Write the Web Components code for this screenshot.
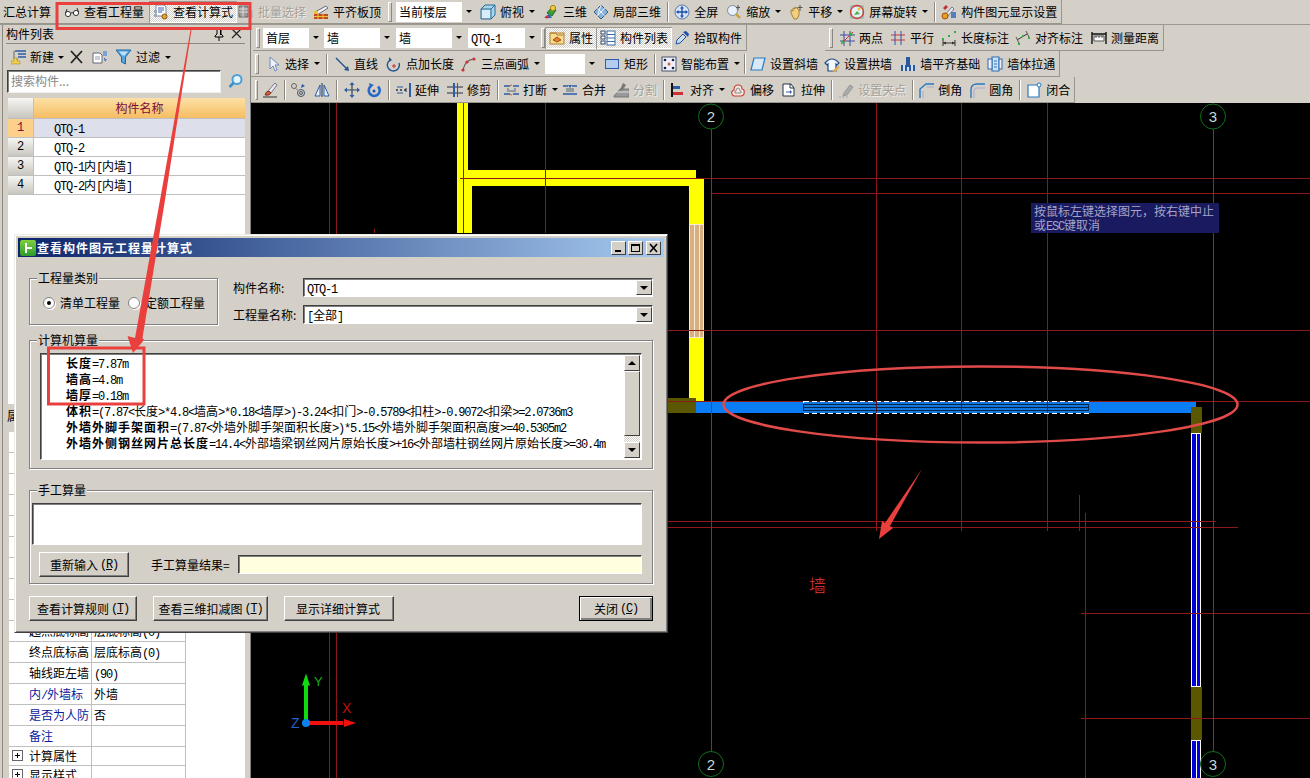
<!DOCTYPE html>
<html lang="zh">
<head>
<meta charset="utf-8">
<title>查看构件图元工程量计算式</title>
<style>
  html, body { margin: 0; width: 1310px; height: 778px; overflow: hidden; background: #d4d0c8; }
  body { position: relative; font: 12px/16px "Noto Sans CJK SC", "Liberation Sans", sans-serif; color: #000; }
  .l { font: 12px/16px "Liberation Mono", monospace; letter-spacing: -1.2px; }
</style>
</head>
<body>

<gl-app>
  <gl-toolbar slot="top">
    <gl-tool style="margin-left:-1px">汇总计算</gl-tool>
    <gl-tool icon="glasses" style="margin-left:5px">查看工程量</gl-tool>
    <gl-tool icon="calc" pressed style="margin-left:1px">查看计算式</gl-tool>
    <gl-tool icon="batch" disabled style="margin-left:-3px">批量选择</gl-tool>
    <gl-tool icon="level" style="margin-left:-1px">平齐板顶</gl-tool>
    <gl-grip style="margin:0 4px 0 3px"></gl-grip>
    <gl-combo w="80">当前楼层</gl-combo>
    <gl-tool icon="cube" caret>俯视</gl-tool>
    <gl-tool icon="view3d">三维</gl-tool>
    <gl-tool icon="local3d" style="margin-left:-2px">局部三维</gl-tool>
    <gl-sep></gl-sep>
    <gl-tool icon="full">全屏</gl-tool>
    <gl-tool icon="zoom" caret>缩放</gl-tool>
    <gl-tool icon="pan" caret style="margin-left:-1px">平移</gl-tool>
    <gl-tool icon="spin" caret style="margin-left:-2px">屏幕旋转</gl-tool>
    <gl-sep></gl-sep>
    <gl-tool icon="display">构件图元显示设置</gl-tool>
  </gl-toolbar>

  <gl-dock-panel slot="left"></gl-dock-panel>

  <gl-toolbar-row slot="bars">
    <gl-toolbar style="margin-left:2px">
      <gl-grip style="margin:0 3px 0 3px"></gl-grip>
      <gl-combo w="60">首层</gl-combo>
      <gl-combo w="70" style="margin-left:1px">墙</gl-combo>
      <gl-combo w="70" style="margin-left:2px">墙</gl-combo>
      <gl-combo w="71" style="margin-left:2px"><span class="l">QTQ-1</span></gl-combo>
      <gl-grip style="margin:0 1px 0 2px"></gl-grip>
      <gl-tool icon="prop" pressed style="margin-left:-1px">属性</gl-tool>
      <gl-tool icon="list" pressed style="margin-left:-1px">构件列表</gl-tool>
      <gl-tool icon="pick" style="margin-left:-2px">拾取构件</gl-tool>
    </gl-toolbar>
    <gl-toolbar style="margin-left:78px">
      <gl-grip style="margin:0 2px 0 4px"></gl-grip>
      <gl-tool icon="twopoint">两点</gl-tool>
      <gl-tool icon="parallel" style="margin-left:-1px">平行</gl-tool>
      <gl-tool icon="lenmark" style="margin-left:-1px">长度标注</gl-tool>
      <gl-tool icon="alignmark" style="margin-left:-2px">对齐标注</gl-tool>
      <gl-tool icon="measure">测量距离</gl-tool>
    </gl-toolbar>
  </gl-toolbar-row>

  <gl-toolbar-row slot="bars">
    <gl-toolbar>
      <gl-grip style="margin:0 2px 0 4px"></gl-grip>
      <gl-tool icon="cursor" caret>选择</gl-tool>
      <gl-sep></gl-sep>
      <gl-tool icon="line" style="margin-left:1px">直线</gl-tool>
      <gl-tool icon="pointlen">点加长度</gl-tool>
      <gl-tool icon="arc" caret style="margin-left:-1px">三点画弧</gl-tool>
      <gl-combo w="54" style="margin-left:1px"></gl-combo>
      <gl-tool icon="rect" style="margin-left:1px">矩形</gl-tool>
      <gl-sep></gl-sep>
      <gl-tool icon="smart" caret>智能布置</gl-tool>
      <gl-sep style="margin:0"></gl-sep>
      <gl-tool icon="skew">设置斜墙</gl-tool>
      <gl-tool icon="arch" style="margin-left:-2px">设置拱墙</gl-tool>
      <gl-tool icon="base">墙平齐基础</gl-tool>
      <gl-tool icon="pull" style="margin-left:-1px">墙体拉通</gl-tool>
    </gl-toolbar>
  </gl-toolbar-row>

  <gl-toolbar-row slot="bars">
    <gl-toolbar>
      <gl-grip style="margin:0 0 0 4px;width:3px"></gl-grip>
      <gl-tool icon="brush"></gl-tool>
      <gl-sep></gl-sep>
      <gl-tool icon="copy" style="margin-left:-1px"></gl-tool>
      <gl-tool icon="mirror"></gl-tool>
      <gl-sep></gl-sep>
      <gl-tool icon="move" style="margin-left:1px"></gl-tool>
      <gl-tool icon="rotate" style="margin-left:-2px"></gl-tool>
      <gl-sep></gl-sep>
      <gl-tool icon="extend">延伸</gl-tool>
      <gl-tool icon="trim">修剪</gl-tool>
      <gl-sep></gl-sep>
      <gl-tool icon="break" caret style="margin-left:-1px">打断</gl-tool>
      <gl-tool icon="merge" style="margin-left:-4px">合并</gl-tool>
      <gl-tool icon="split" disabled style="margin-left:-1px">分割</gl-tool>
      <gl-sep></gl-sep>
      <gl-tool icon="align" caret>对齐</gl-tool>
      <gl-tool icon="offset" style="margin-left:-3px">偏移</gl-tool>
      <gl-tool icon="stretch" style="margin-left:-1px">拉伸</gl-tool>
      <gl-sep></gl-sep>
      <gl-tool icon="grippt" disabled>设置夹点</gl-tool>
      <gl-sep></gl-sep>
      <gl-tool icon="chamfer" style="margin-left:-1px">倒角</gl-tool>
      <gl-tool icon="fillet" style="margin-left:-1px">圆角</gl-tool>
      <gl-sep></gl-sep>
      <gl-tool icon="closed">闭合</gl-tool>
    </gl-toolbar>
  </gl-toolbar-row>

  <gl-cad-view slot="canvas"></gl-cad-view>
</gl-app>

<gl-dialog title="查看构件图元工程量计算式">
  <gl-dialog-head>
    <gl-group legend="工程量类别" style="width:189px;height:47px">
      <gl-radios></gl-radios>
    </gl-group>
    <gl-form-row label="构件名称:"><gl-field arrow><span class="l">QTQ-1</span></gl-field></gl-form-row>
    <gl-form-row label="工程量名称:"><gl-field arrow><span class="l">[</span>全部<span class="l">]</span></gl-field></gl-form-row>
  </gl-dialog-head>

  <gl-group legend="计算机算量" style="height:129px;margin-top:16px">
    <gl-calc-box>
      <gl-mix b="长度" text="=7.87m"></gl-mix>
      <gl-mix b="墙高" text="=4.8m"></gl-mix>
      <gl-mix b="墙厚" text="=0.18m"></gl-mix>
      <gl-mix b="体积" text="=(7.87<长度>*4.8<墙高>*0.18<墙厚>)-3.24<扣门>-0.5789<扣柱>-0.9072<扣梁>=2.0736m3"></gl-mix>
      <gl-mix b="外墙外脚手架面积" text="=(7.87<外墙外脚手架面积长度>)*5.15<外墙外脚手架面积高度>=40.5305m2"></gl-mix>
      <gl-mix b="外墙外侧钢丝网片总长度" text="=14.4<外部墙梁钢丝网片原始长度>+16<外部墙柱钢丝网片原始长度>=30.4m"></gl-mix>
    </gl-calc-box>
  </gl-group>

  <gl-group legend="手工算量" style="height:94px;margin-top:21px">
    <gl-manual-input></gl-manual-input>
  </gl-group>

  <gl-dialog-foot>
    <gl-button w="108" key="T">查看计算规则</gl-button>
    <gl-button w="115" key="T" style="margin-left:16px">查看三维扣减图</gl-button>
    <gl-button w="110" style="margin-left:16px">显示详细计算式</gl-button>
    <gl-button w="74" key="C" default style="margin-left:auto">关闭</gl-button>
  </gl-dialog-foot>
</gl-dialog>

<gl-tip>按鼠标左键选择图元，按右键中止<br>或<span class="l">ESC</span>键取消</gl-tip>
<gl-marks></gl-marks>

<script>
// small helper for the shadow root boilerplate
function shadow(el, css, html) {
  el.attachShadow({ mode: 'open' }).innerHTML = '<style>' + css + '</style>' + html;
}

// CJK stays full width, latin runs get squeezed to 6px a char (the SimSun half width)
function mix(str) {
  return str.replace(/[\x20-\x7e]+/g, function (m) {
    var t = m.replace(/&/g, '&amp;').replace(/</g, '&lt;').replace(/>/g, '&gt;');
    return '<span style="font:12px/16px \'Liberation Mono\',monospace;letter-spacing:-1.2px">' + t + '</span>';
  });
}

const ICONS = {
  glasses: '<circle cx="4" cy="10" r="2.6" fill="#fff" stroke="#333"/><circle cx="12" cy="9" r="2.6" fill="#fff" stroke="#333"/><path d="M6.5 9.5Q8 8 9.5 9M1.5 9 3 5M14.5 8 13 4" fill="none" stroke="#333"/>',
  calc: '<path d="M3 1h8l2 2v9H3z" fill="#fff" stroke="#7a8aa8"/><path d="M5 4h6M5 6h6M5 8h4" stroke="#3a62b0"/><rect x="1" y="6" width="3" height="3" fill="#9ab"/><rect x="1" y="10" width="3" height="3" fill="#9ab"/><circle cx="11.5" cy="12.5" r="2.5" fill="#e8a030" stroke="#8a5a10"/>',
  batch: '<path d="M1 2h9v11H1z" fill="#999" stroke="#666"/><path d="M1 5h9M1 8h9M5 2v11" stroke="#ddd"/><path d="M11 6h4v8h-4z" fill="#bbb"/>',
  level: '<path d="M2 8 13 2l2 2L4 11z" fill="#f4f4f4" stroke="#667"/><rect x="1" y="10" width="14" height="5" fill="#c04a20"/><path d="M1 12.5h14M5 10v5M10 10v5" stroke="#f0c040"/><rect x="1" y="7" width="4" height="3" fill="#f0c030"/>',
  cube: '<path d="M1 5l4-4h10v10l-4 4H1z" fill="#a8d4ee" stroke="#2a6a90"/><path d="M1 5h10v10M11 5l4-4" fill="none" stroke="#2a6a90"/><path d="M2 6h8v8H2z" fill="#d8eefa"/>',
  view3d: '<path d="M4 9l5-6 4 3-4 6z" fill="#3aa040" stroke="#1a6a20"/><circle cx="10" cy="4" r="2.6" fill="#f0d040" stroke="#a88010"/><path d="M1 14l5-4 3 4z" fill="#3060c0"/><circle cx="4" cy="13" r="1.6" fill="#d03030"/>',
  local3d: '<path d="M1 8l7-7 7 7-7 7z" fill="#8ab4dc" stroke="#3a5e88"/><path d="M4.5 4.5l7 7M8 1l-3.500 10.500M11.500 4.500l-7 7M8 8l3.500-3.500" stroke="#e8f2fa" fill="none"/>',
  full: '<circle cx="8" cy="8" r="7" fill="#d6e4f6" stroke="#5878a8"/><path d="M8 3v10M3 8h10" stroke="#1d4fa8" stroke-width="1.400"/><path d="M8 2l2 2.500H6zM8 14l2-2.500H6zM2 8l2.500-2v4zM14 8l-2.500-2v4z" fill="#1d4fa8"/>',
  zoom: '<circle cx="6.500" cy="6.500" r="5" fill="#e8f0fa" stroke="#7a8aa0"/><path d="M10 10l4 4" stroke="#c8a030" stroke-width="2.400"/><path d="M12 1v5M10 3.500h4" stroke="#555"/>',
  pan: '<path d="M3 9V6l2 1V4l2 1V3l2 1V4l2 2v5l-2 4H6z" fill="#f0d080" stroke="#a88030"/><path d="M12 1v6M9.500 3.500h5" stroke="#555"/>',
  spin: '<rect x="2" y="2" width="12" height="12" fill="#dff0f8" stroke="#7aa" /><circle cx="8" cy="8" r="6.500" fill="none" stroke="#d04030" stroke-width="1.400"/><path d="M5 11l3-4 3 3" fill="#50b040"/><circle cx="10" cy="5" r="1.500" fill="#f0c030"/>',
  display: '<path d="M3 12l8-9 2 2-8 9z" fill="#e8e8f0" stroke="#778"/><circle cx="4" cy="12" r="3" fill="#e8a020" stroke="#a05010"/><path d="M10 8h5v6h-5z" fill="#5080c0"/><path d="M2 4l3-3 2 2-3 3z" fill="#c03030"/>',
  prop: '<rect x="1" y="3" width="14" height="11" fill="#f6dc90" stroke="#b08030"/><path d="M1 3h6l1 2h7" fill="none" stroke="#b08030"/><path d="M4 10l4-3 4 3-4 2z" fill="#e08030" stroke="#a05010"/>',
  list: '<rect x="1" y="1" width="4" height="3" fill="#fff" stroke="#346"/><rect x="1" y="6" width="4" height="3" fill="#fff" stroke="#346"/><rect x="1" y="11" width="4" height="3" fill="#fff" stroke="#346"/><rect x="7" y="1" width="8" height="14" fill="#fff" stroke="#3a6ea8"/><path d="M7 4.500h8M7 8h8M7 11.500h8" stroke="#3a6ea8"/>',
  pick: '<path d="M2 14l1-4 6-6 3 3-6 6z" fill="#cde" stroke="#1d4fa8"/><path d="M9 2l5 5 1-3-3-3z" fill="#1d4fa8"/>',
  twopoint: '<path d="M1 5h15M1 11h15M5 1v15M11 1v15" stroke="#3a4aa0" fill="none"/><path d="M2 14L14 2" stroke="#d03030"/><circle cx="4" cy="12" r="1.600" fill="#30b040"/><circle cx="12" cy="4" r="1.600" fill="#30b040"/>',
  parallel: '<path d="M1 5h14M1 10h14" stroke="#d03030"/><path d="M5 1v14M11 1v14" stroke="#3050b0"/>',
  lenmark: '<path d="M2 13h12M2 10v6M14 10v6" stroke="#333" fill="none"/><path d="M2 13l3-1.500v3zM14 13l-3-1.500v3z" fill="#333"/><rect x="1" y="8" width="2" height="2" fill="#30b040"/><rect x="13" y="1" width="2" height="2" fill="#30b040"/><rect x="7" y="5" width="2" height="2" fill="#30b040"/>',
  alignmark: '<path d="M2 10l10-6" stroke="#333"/><path d="M1 7l3 6M11 1l3 6" stroke="#555"/><rect x="3" y="13" width="2" height="2" fill="#30b040"/><rect x="13" y="7" width="2" height="2" fill="#30b040"/><rect x="7" y="5" width="2" height="2" fill="#30b040"/>',
  measure: '<path d="M1 4h14M1 14V2M15 14V2" stroke="#111" stroke-width="1.400" fill="none"/><path d="M3 6h10v5H3z" fill="#fff" stroke="#555"/><path d="M5 6v2M8 6v2M11 6v2" stroke="#555"/>',
  cursor: '<path d="M5 1v12l3-3 2 5 2-1-2-5h4z" fill="#eef2fa" stroke="#7088b8"/>',
  line: '<path d="M2 2l11 11" stroke="#23558f" stroke-width="1.400"/><path d="M15 15l-1-5-4 4z" fill="#23558f"/>',
  pointlen: '<path d="M13 7a6 6 0 1 1-9-3" fill="none" stroke="#23558f" stroke-width="1.400"/><path d="M3 1l3 3-3 2z" fill="#23558f"/><path d="M8 8v4M6 10h4" stroke="#c03030"/>',
  arc: '<path d="M2 14Q4 4 13 3" fill="none" stroke="#555" stroke-width="1.200"/><circle cx="2" cy="14" r="1.600" fill="#d03030"/><circle cx="6" cy="6" r="1.600" fill="#d03030"/><circle cx="13" cy="3" r="1.600" fill="#d03030"/>',
  rect: '<rect x="1.500" y="3.500" width="13" height="9" fill="#b4ccf0" stroke="#2a5ca8"/>',
  smart: '<rect x="1" y="1" width="14" height="14" fill="#eef" stroke="#456"/><g fill="#123"><circle cx="4" cy="4" r="1.300"/><circle cx="12" cy="4" r="1.300"/><circle cx="4" cy="12" r="1.300"/><circle cx="12" cy="12" r="1.300"/></g><circle cx="8" cy="8" r="1.500" fill="#d06020"/>',
  skew: '<path d="M4 2h11l-3 12H1z" fill="#d8e8f8" stroke="#2a7ac0" stroke-width="1.200"/>',
  arch: '<path d="M1 7Q8-1 15 7l-2 2-1-1v7H4V8L3 9z" fill="#f4f8fc" stroke="#1c4c84" stroke-width="1.200"/><path d="M8 15l6-5 2 1-5 5z" fill="#e0b050"/>',
  base: '<path d="M6 1h4v8H6z" fill="#2858a0"/><path d="M1 9h14v6H1z" fill="#2858a0"/><path d="M3 9h2v6H3zM11 9h2v6h-2zM7 11h2v4H7z" fill="#cfe0f4"/>',
  pull: '<rect x="5" y="1" width="7" height="14" fill="#d0e4f8" stroke="#2a6ab0"/><rect x="1" y="3" width="4" height="10" fill="#eef" stroke="#2a6ab0"/><rect x="12" y="3" width="3" height="10" fill="#eef" stroke="#2a6ab0"/><path d="M7 5h3M7 8h3M7 11h3" stroke="#2a6ab0"/>',
  brush: '<path d="M1 15h14" stroke="#333"/><path d="M6 9l7-8 2 2-6 8z" fill="#e8e8f0" stroke="#778"/><path d="M3 13q1-4 4-4l2 2q-1 3-6 2z" fill="#d06040" stroke="#803020"/>',
  copy: '<circle cx="4" cy="4" r="2.500" fill="none" stroke="#666"/><circle cx="11" cy="11" r="3.500" fill="none" stroke="#456"/><circle cx="11" cy="11" r="1.500" fill="none" stroke="#456"/><path d="M5 6l4 3" stroke="#888"/><path d="M12 2l3 2-4 2z" fill="#2a5ca8"/>',
  mirror: '<path d="M8 1v14" stroke="#234"/><path d="M6 3v11H1z" fill="#e8f0fa" stroke="#2a5ca8"/><path d="M10 3v11h5z" fill="#e8f0fa" stroke="#2a5ca8"/>',
  move: '<path d="M8 1v14M1 8h14" stroke="#345" stroke-width="1.200"/><path d="M8 0l2.500 3h-5zM8 16l2.500-3h-5zM0 8l3-2.500v5zM16 8l-3-2.500v5z" fill="#2a5ca8"/>',
  rotate: '<path d="M12 4.500a5.500 5.500 0 1 1-7-.5" fill="none" stroke="#2868c8" stroke-width="2.600"/><path d="M3 1l5 2-4 3z" fill="#2868c8"/><circle cx="8" cy="9" r="1.500" fill="#1d4fa8"/>',
  extend: '<path d="M1 8h2M5 8h2M9 8h2" stroke="#234" stroke-width="1.600"/><path d="M11 6v4" stroke="#234"/><path d="M14 1v14h2V1z" fill="#2a5ca8"/><path d="M2 5h6M2 11h6" stroke="#2a5ca8"/>',
  trim: '<path d="M0 5h16M0 11h16" stroke="#234"/><path d="M6 1v14h2V1zM10 1v14h1V1z" fill="#2a5ca8"/>',
  break: '<path d="M1 4h6M10 4h6" stroke="#2a5ca8" stroke-width="1.600"/><path d="M1 12h6M10 12h6" stroke="#2a5ca8" stroke-width="1.600"/><path d="M4 7h2M11 7h2M4 9h9" stroke="#567"/><path d="M8 2l1 2H7zM8 14l1-2H7z" fill="#d06020"/>',
  merge: '<path d="M1 4h5M10 4h5M1 12h14" stroke="#2a5ca8" stroke-width="1.600"/><path d="M4 7h8M4 9h8" stroke="#567"/><path d="M8 6l-2-3h4z" fill="#2a5ca8"/>',
  split: '<path d="M1 14l6-7h9v8H1z" fill="#999" stroke="#777"/><path d="M10 1l3 2-4 6-2-1z" fill="#777"/><path d="M1 10h15" stroke="#ddd"/>',
  align: '<path d="M2 1v14" stroke="#111" stroke-width="2"/><path d="M3 4h7v3H3z" fill="#2a5ca8"/><path d="M3 10h10v3H3z" fill="#d03030"/>',
  offset: '<path d="M2 12q-1-3 2-4 0-5 4-5t4 4q3 0 2 5-1 2-3 2H4q-1 0-2-2z" fill="#f8e8e4" stroke="#c04030" stroke-width="1.200"/><path d="M5 11q-1-2 1-2 0-3 2-3t2 3q2 0 1 2z" fill="none" stroke="#888"/>',
  stretch: '<path d="M2 2h8l3 4v8H2z" fill="#fff" stroke="#234"/><path d="M9 2v4h4" fill="none" stroke="#234"/><path d="M5 10h5" stroke="#2a5ca8"/><path d="M11 10l-2-2v4z" fill="#2a5ca8"/>',
  grippt: '<path d="M1 15h5M8 15h3" stroke="#aaa" stroke-dasharray="2 1"/><path d="M6 11l6-8 3 2-6 8-4 1z" fill="#aaa" stroke="#999"/>',
  chamfer: '<path d="M2 16V7l6-5h8" fill="none" stroke="#2a7ac0" stroke-width="1.400"/><path d="M5 16V9M9 5h7" stroke="#aac" fill="none"/>',
  fillet: '<path d="M2 16V8q0-6 6-6h8" fill="none" stroke="#2a7ac0" stroke-width="1.400"/><path d="M5 16V9q0-3 3-3h8" stroke="#aac" fill="none"/>',
  closed: '<path d="M2 3h11v12H2z" fill="#fff" stroke="#2a7ac0" stroke-width="1.200"/><circle cx="13" cy="3" r="2" fill="#f4f8ff" stroke="#2a7ac0"/>',
  pin: '<path d="M5 2h6v1h-1v5l2 2v1H4v-1l2-2V3H5zM8 11v4" fill="none" stroke="#000"/><rect x="9" y="3" width="1" height="6"/>',
  close: '<path d="M3 3l9 9M12 3l-9 9" stroke="#222" stroke-width="1.200"/>',
  add: '<path d="M4 2h11M7 5h8M7 8h8" stroke="#2a5ca8" stroke-width="1.300"/><path d="M3 2v8h4" fill="none" stroke="#666"/><path d="M3 9h3v3h3v3H6v-.1H3V15H0v-3h3z" fill="#f0d050" stroke="#a88a20" stroke-width=".6"/>',
  del: '<path d="M2 2l11 12M13 2L2 14" stroke="#222" stroke-width="1.800"/>',
  dup: '<path d="M1 4h7l2 2v8H1z" fill="#fff" stroke="#667"/><path d="M3 8h5M3 10h5" stroke="#99a"/><path d="M11 2h4v5h-4zM12 10h3l-1.500 3z" fill="#7aa0d8"/><path d="M12 9q2 1 1 3" stroke="#2a5ca8" fill="none"/>',
  filter: '<path d="M0 1h15L9.500 8v7l-4-2V8z" fill="#58a6e0" stroke="#1a6aa8"/><path d="M3 2.500h9l-3.500 4h-2z" fill="#bfe0f8"/>',
  search: '<circle cx="9" cy="6.500" r="4.500" fill="#e8f4fc" stroke="#4aa0d8" stroke-width="2"/><path d="M5.500 10l-4 4" stroke="#3a8cc8" stroke-width="2.500"/>'
};

class GlIcon extends HTMLElement {
  constructor() {
    super();
    shadow(this, ':host{display:block;width:16px;height:16px;flex:none} svg{display:block}',
      '<svg width="16" height="16" viewBox="0 0 16 16"></svg>');
  }
  connectedCallback() {
    this.shadowRoot.querySelector('svg').innerHTML = ICONS[this.getAttribute('name')] || '';
  }
}
customElements.define('gl-icon', GlIcon);

class GlApp extends HTMLElement {
  constructor() {
    super();
    shadow(this, `
      :host { display: grid; grid-template-columns: 251px 1fr; grid-template-rows: 25px 78px 1fr;
              width: 1310px; height: 778px; }
      .top { grid-column: 1 / 3; display: flex; box-sizing: border-box; padding-bottom: 1px; box-shadow: inset 0 -1px #9a9890; }
      .left { grid-row: 2 / 4; min-height: 0; }
      .bars { display: flex; flex-direction: column; }
      .canvas { min-height: 0; min-width: 0; }
    `, `
      <div class="top"><slot name="top"></slot></div>
      <div class="left"><slot name="left"></slot></div>
      <div class="bars"><slot name="bars"></slot></div>
      <div class="canvas"><slot name="canvas"></slot></div>
    `);
  }
}
customElements.define('gl-app', GlApp);

class GlToolbarRow extends HTMLElement {
  constructor() {
    super();
    shadow(this, ':host{display:flex;height:26px;box-sizing:border-box}', '<slot></slot>');
  }
}
customElements.define('gl-toolbar-row', GlToolbarRow);

class GlToolbar extends HTMLElement {
  constructor() {
    super();
    shadow(this, `:host { display: flex; align-items: center; height: 100%; box-sizing: border-box;
        border-right: 1px solid #98958c; border-bottom: 1px solid #98958c; white-space: nowrap; }`, '<slot></slot>');
  }
}
customElements.define('gl-toolbar', GlToolbar);

class GlTool extends HTMLElement {
  constructor() {
    super();
    shadow(this, `
      :host { display: inline-flex; align-items: center; height: 22px; box-sizing: border-box; padding: 0 4px; gap: 4px; flex: none; }
      :host([pressed]) { background: repeating-conic-gradient(#fff 0 25%, #d4d0c8 0 50%) 0 0 / 2px 2px;
        box-shadow: inset 1px 1px #9a9890, inset -1px -1px #fff; }
      :host([disabled]) { color: #a4a19a; text-shadow: 1px 1px #f0eee8; }
      .caret { width: 0; height: 0; margin-left: 1px; border: 3px solid transparent; border-top: 3px solid #000; border-bottom: 0; }
    `, '<slot></slot>');
  }
  connectedCallback() {
    var root = this.shadowRoot;
    var name = this.getAttribute('icon');
    if (name) {
      var ic = document.createElement('gl-icon');
      ic.setAttribute('name', name);
      root.insertBefore(ic, root.querySelector('slot'));
    }
    if (this.hasAttribute('caret')) {
      var c = document.createElement('i');
      c.className = 'caret';
      root.appendChild(c);
    }
  }
}
customElements.define('gl-tool', GlTool);

class GlSep extends HTMLElement {
  constructor() {
    super();
    shadow(this, `:host { display: block; flex: none; width: 2px; height: 20px; margin: 0 1px 0 2px;
        border-left: 1px solid #8a8880; border-right: 1px solid #fff; box-sizing: border-box; }`, '');
  }
}
customElements.define('gl-sep', GlSep);

class GlGrip extends HTMLElement {
  constructor() {
    super();
    shadow(this, `:host { display: block; flex: none; width: 4px; height: 20px; box-sizing: border-box;
        border: 1px solid; border-color: #fff #8a8880 #8a8880 #fff; }`, '');
  }
}
customElements.define('gl-grip', GlGrip);

// flat combo of the toolbars
class GlCombo extends HTMLElement {
  constructor() {
    super();
    shadow(this, `
      :host { display: inline-flex; flex: none; height: 20px; background: #fff; box-sizing: border-box; align-items: stretch; }
      .t { flex: 1; padding-left: 3px; line-height: 19px; overflow: hidden; white-space: nowrap; }
      .b { width: 14px; background: #d4d0c8; display: flex; align-items: center; justify-content: center; }
      .b i { border: 3px solid transparent; border-top: 3px solid #000; border-bottom: 0; }
    `, '<div class="t"><slot></slot></div><div class="b"><i></i></div>');
  }
  connectedCallback() { this.style.width = this.getAttribute('w') + 'px'; }
}
customElements.define('gl-combo', GlCombo);

class GlDockPanel extends HTMLElement {
  constructor() {
    super();
    shadow(this, `
      :host { display: flex; flex-direction: column; height: 753px; box-sizing: border-box;
              border-right: 1px solid #808080; padding-left: 6px; padding-right: 5px;
              box-shadow: inset 2px 0 #d4d0c8, inset 3px 0 #8a8880; overflow: hidden; }
      .head { height: 18px; display: flex; align-items: center; border-bottom: 1px solid #8a8880; flex: none; }
      .head span { flex: 1; }
      .bar { height: 26px; display: flex; align-items: center; flex: none; padding-left: 1px; box-sizing: border-box; }
      .search { height: 28px; display: flex; flex: none; align-items: flex-start; }
      .search .in { width: 214px; height: 23px; box-sizing: border-box; border: 1px solid; border-color: #404040 #eee #eee #404040; box-shadow: inset 1px 1px #808080;
            background: #fff; color: #888; padding-left: 3px; line-height: 20px; margin-left: 1px; }
      .search gl-icon { margin: 3px 0 0 7px; }
      .grid { height: 306px; background: #fff; flex: none; margin-left: 2px; }
      .row { display: grid; grid-template-columns: 26px 1fr; height: 19px; }
      .row > * { box-sizing: border-box; border-bottom: 1px solid #bfbfbf; }
      .n { background: linear-gradient(#f6f6f3, #c8c6be); text-align: center; border-right: 1px solid #bfbfbf; font: 12px/18px 'Liberation Mono', monospace; }
      .d { padding-left: 20px; height: 19px; padding-top: 1px; }
      .hd { height: 21px; }
      .hd .d { background: linear-gradient(#fce0a6, #f6bd62); padding: 0; height: 21px; text-align: center; color: #7a0c3a; line-height: 20px; }
      .sel .n { background: #fcd088; color: #7a0c3a; }
      .sel .d { background: #dde0ea; }
      .propHead { height: 28px; line-height: 24px; flex: none; padding-left: 1px; }
      .props { flex: 1; background: #fff; margin-left: 3px; }
    `, `
      <div class="head"><span>构件列表</span><gl-icon name="pin"></gl-icon><gl-icon name="close" style="margin-left:2px"></gl-icon></div>
      <div class="bar">
        <gl-tool icon="add" caret style="gap:3px">新建</gl-tool>
        <gl-icon name="del" style="margin-left:1px"></gl-icon>
        <gl-icon name="dup" style="margin-left:7px"></gl-icon>
        <gl-tool icon="filter" caret style="margin-left:4px">过滤</gl-tool>
      </div>
      <div class="search"><div class="in">搜索构件...</div><gl-icon name="search"></gl-icon></div>
      <div class="grid">
        <div class="row hd"><div class="n"></div><div class="d">构件名称</div></div>
        <div class="row sel"><div class="n">1</div><div class="d"><gl-mix text="QTQ-1"></gl-mix></div></div>
        <div class="row"><div class="n">2</div><div class="d"><gl-mix text="QTQ-2"></gl-mix></div></div>
        <div class="row"><div class="n">3</div><div class="d"><gl-mix text="QTQ-1内[内墙]"></gl-mix></div></div>
        <div class="row"><div class="n">4</div><div class="d"><gl-mix text="QTQ-2内[内墙]"></gl-mix></div></div>
      </div>
      <div class="propHead">属性</div>
      <div class="props"><gl-prop-table></gl-prop-table></div>
    `);
  }
}
customElements.define('gl-dock-panel', GlDockPanel);

class GlMix extends HTMLElement {
  constructor() {
    super();
    // the old GDI fake bold is 1px wider per char
    shadow(this, ':host{display:block;height:16px;white-space:nowrap;line-height:16px} span.w{display:block;height:16px} b{font-weight:700;letter-spacing:1px}', '<span class="w"></span>');
  }
  connectedCallback() {
    var b = this.getAttribute('b');
    this.shadowRoot.querySelector('.w').innerHTML = (b ? '<b>' + b + '</b>' : '') + mix(this.getAttribute('text') || '');
  }
}
customElements.define('gl-mix', GlMix);

class GlPropTable extends HTMLElement {
  constructor() {
    super();
    shadow(this, `
      :host { display: block; }
      .r { display: grid; grid-template-columns: 83px 94px; height: 21px; }
      .r > div { border-bottom: 1px solid #bfbfbf; border-right: 1px solid #bfbfbf; box-sizing: border-box; line-height: 20px; white-space: nowrap; overflow: hidden; padding-left: 2px; }
      .r > div:first-child { padding-left: 20px; }
      .blue > div:first-child { color: #0a1a9c; }
      .exp { height: 19px; }
      .exp > div:first-child { position: relative; line-height: 18px; }
      .box { position: absolute; left: 3px; top: 3px; width: 9px; height: 9px; border: 1px solid #666; background: #fff; }
      .box::before, .box::after { content: ''; position: absolute; background: #000; }
      .box::before { left: 2px; right: 2px; top: 4px; height: 1px; }
      .box::after { top: 2px; bottom: 2px; left: 4px; width: 1px; }
    `, '<div id="rows"></div>');
    var rows = '';
    for (var i = 0; i < 9; i++) rows += '<div class="r"><div></div><div></div></div>';
    var data = [
      ['起点底标高', '层底标高(0)', ''],
      ['终点底标高', '层底标高(0)', ''],
      ['轴线距左墙', ' (90)', ''],
      ['内/外墙标', '外墙', 'blue'],
      ['是否为人防', '否', 'blue'],
      ['备注', '', 'blue']
    ];
    data.forEach(function (d) {
      rows += '<div class="r ' + d[2] + '"><div>' + mix(d[0]) + '</div><div>' + mix(d[1]) + '</div></div>';
    });
    rows += '<div class="r exp"><div><span class="box"></span>计算属性</div><div></div></div>';
    rows += '<div class="r exp"><div><span class="box"></span>显示样式</div><div></div></div>';
    this.shadowRoot.getElementById('rows').innerHTML = rows;
  }
}
customElements.define('gl-prop-table', GlPropTable);

class GlCadView extends HTMLElement {
  constructor() {
    super();
    // viewBox is in page pixels, it makes the drawing easy to check against the screenshot
    // line() takes pixel coords and centres the stroke on the pixel
    var line = function (l) {
      var v = l[0] === l[2];
      return '<line x1="' + (l[0] + (v ? .5 : 0)) + '" y1="' + (l[1] + (v ? 0 : .5)) + '" x2="' + (l[2] + (v ? .5 : 0)) + '" y2="' + (l[3] + (v ? 0 : .5)) + '"/>';
    };
    var dark = [
      [329, 103, 329, 778], [336, 103, 336, 778], [374, 229, 374, 233], [463, 103, 463, 233], [545, 103, 545, 233],
      [876, 103, 876, 531], [961, 103, 961, 531], [1047, 103, 1047, 531],
      [1079, 495, 1079, 531], [1085, 513, 1085, 778],
      [460, 178, 1310, 178], [711, 193, 1310, 193], [667, 330, 1310, 330], [667, 401, 1310, 401],
      [667, 521, 1216, 521], [667, 527, 1238, 527], [1081, 613, 1310, 613], [1081, 718, 1310, 718]
    ].map(line).join('');
    var column = function (y, h) {
      return '<rect x="1191.500" y="' + y + '" width="9" height="' + h + '" fill="#0000d8" stroke="#fff"/>' +
             '<line x1="1196" y1="' + y + '" x2="1196" y2="' + (y + h) + '" stroke="#fff"/>';
    };
    var axis = function (x, y, t) {
      return '<circle cx="' + x + '" cy="' + y + '" r="12.500" fill="#000" stroke="#12701a"/>' +
             '<text x="' + x + '" y="' + (y + 5.5) + '" text-anchor="middle" fill="#c4d8dc" font-family="Liberation Sans" font-size="15">' + t + '</text>';
    };
    shadow(this, ':host{display:block;height:100%;background:#000;overflow:hidden} svg{display:block}', `
      <svg width="1059" height="675" viewBox="251 103 1059 675" shape-rendering="crispEdges">
        <rect x="251" y="103" width="1059" height="675" fill="#000"/>
        <path d="M457 103h11v67h228v8h8v46h-15v-38H472v47h-15z" fill="#ff0"/>
        <rect x="689" y="338" width="15" height="63" fill="#ff0"/>
        <rect x="689" y="224" width="15" height="114" fill="#d8b080"/>
        <path d="M689.500 224.500h14v113h-14zM694.500 224v114M699.500 224v114" fill="none" stroke="#f4ead8"/>
        <rect x="696" y="402" width="500" height="11" fill="#0a7cf4"/>
        <rect x="667" y="398" width="29" height="15" fill="#5b5600"/>
        <rect x="1191" y="407" width="11" height="26" fill="#5b5600"/>
        <rect x="1191" y="687" width="11" height="53" fill="#5b5600"/>
        ${column(433.5, 253)}
        ${column(740.5, 40)}
        <g stroke="#8c1818" stroke-width="1">${dark}</g>
        <g stroke="#c41414" stroke-width="1">
          <line x1="711.500" y1="129" x2="711.500" y2="751"/>
          <line x1="1213.500" y1="129" x2="1213.500" y2="751"/>
        </g>
        <rect x="803.500" y="401.500" width="285" height="11.500" fill="#1278de" stroke="#fff" stroke-dasharray="5 3"/>
        <path d="M803.500 404.500h285v6h-285zM803.500 407.500h285" fill="none" stroke="#04264c"/>
        <path d="M876.500 401v12M961.500 401v12M1047.500 401v12" stroke="#5a1020"/>
        <g shape-rendering="geometricPrecision">
          ${axis(711, 116.5, '2')}
          ${axis(1213, 116.5, '3')}
          ${axis(711, 764, '2')}
          ${axis(1213, 764, '3')}
          <text x="809" y="592" fill="#e03a3a" font-family="Noto Sans CJK SC" font-size="17" font-weight="300">墙</text>
          <path d="M306 722V684" stroke="#0fdc0f" stroke-width="4"/>
          <path d="M306 673.500l4 12h-8z" fill="#0fdc0f"/>
          <path d="M306 723H343" stroke="#f01010" stroke-width="4"/>
          <path d="M356 723l-12-4v8z" fill="#f01010"/>
          <circle cx="306" cy="723" r="4" fill="#0a82f0"/>
          <text x="314" y="686" fill="#18b018" font-family="Liberation Sans" font-size="13">Y</text>
          <text x="342" y="713" fill="#c01010" font-family="Liberation Sans" font-size="14">X</text>
          <text x="291" y="728" fill="#2060d0" font-family="Liberation Sans" font-size="14">Z</text>
        </g>
      </svg>
    `);
  }
}
customElements.define('gl-cad-view', GlCadView);

class GlDialog extends HTMLElement {
  constructor() {
    super();
    shadow(this, `
      :host { position: absolute; left: 14px; top: 234px; width: 654px; height: 399px; box-sizing: border-box; display: flex; flex-direction: column;
              background: #d4d0c8; border: 1px solid; border-color: #eeece6 #404040 #404040 #eeece6; box-shadow: inset 1px 1px #fff, inset -1px -1px #808080; padding: 2px 3px; }
      .title { height: 19px; flex: none; display: flex; align-items: center; background: linear-gradient(90deg, #0a246a, #a6caf0); color: #fff; font-weight: 700; letter-spacing: 1px; padding: 0 3px 0 2px; margin-top: 1px; }
      .title span { flex: 1; margin-left: 1px; }
      .logo { width: 16px; height: 16px; background: linear-gradient(#7fd040, #2c9a2a); border-radius: 2px; position: relative; flex: none; }
      .logo::before { content: ''; position: absolute; left: 5px; top: 3px; width: 2px; height: 10px; background: #fff; }
      .logo::after { content: ''; position: absolute; left: 6px; top: 7px; width: 6px; height: 2px; background: #fff; }
      .wb { width: 15px; height: 14px; margin-left: 2px; box-sizing: border-box; background: #d4d0c8; border: 1px solid; border-color: #fff #404040 #404040 #fff; display: block; }
      .wb svg { display: block; }
      .body { flex: 1; padding: 21px 11px 0 11px; display: flex; flex-direction: column; min-height: 0; }
    `, `
      <div class="title"><div class="logo"></div><span id="t"></span>
        <div class="wb"><svg width="13" height="12"><rect x="3" y="8" width="6" height="2"/></svg></div>
        <div class="wb"><svg width="13" height="12"><rect x="2.500" y="2.500" width="8" height="7" fill="none" stroke="#000"/><rect x="2" y="2" width="9" height="2"/></svg></div>
        <div class="wb" style="margin-left:3px"><svg width="13" height="12"><path d="M3 2l7 8M10 2l-7 8" stroke="#000" stroke-width="1.600"/></svg></div>
      </div>
      <div class="body"><slot></slot></div>
    `);
  }
  connectedCallback() { this.shadowRoot.getElementById('t').textContent = this.getAttribute('title'); this.removeAttribute('title'); }
}
customElements.define('gl-dialog', GlDialog);

class GlDialogHead extends HTMLElement {
  constructor() {
    super();
    shadow(this, `:host { display: grid; grid-template-columns: 189px 1fr; grid-template-rows: 19px 19px; column-gap: 15px; row-gap: 8px; flex: none; }
      ::slotted(gl-group) { grid-row: 1 / 3; }`, '<slot></slot>');
  }
}
customElements.define('gl-dialog-head', GlDialogHead);

class GlFormRow extends HTMLElement {
  constructor() {
    super();
    shadow(this, ':host{display:grid;grid-template-columns:70px 1fr;align-items:center} span{white-space:nowrap}', '<span id="l"></span><slot></slot>');
  }
  connectedCallback() { this.shadowRoot.getElementById('l').textContent = this.getAttribute('label'); }
}
customElements.define('gl-form-row', GlFormRow);

class GlField extends HTMLElement {
  constructor() {
    super();
    shadow(this, `
      :host { display: flex; height: 19px; box-sizing: border-box; background: #fff; border: 1px solid; border-color: #404040 #fff #fff #404040; box-shadow: inset 1px 1px #808080; }
      .t { flex: 1; padding-left: 3px; line-height: 17px; white-space: nowrap; }
      .b { width: 16px; margin: 1px 0; background: #d4d0c8; border: 1px solid; border-color: #fff #404040 #404040 #fff; box-sizing: border-box; display: none; align-items: center; justify-content: center; }
      :host([arrow]) .b { display: flex; }
      .b i { border: 4px solid transparent; border-top: 4px solid #000; border-bottom: 0; }
    `, '<div class="t"><slot></slot></div><div class="b"><i></i></div>');
  }
}
customElements.define('gl-field', GlField);

class GlGroup extends HTMLElement {
  constructor() {
    super();
    shadow(this, `
      :host { display: block; box-sizing: border-box; flex: none; border: 1px solid #808080; box-shadow: inset 1px 1px #fff, 1px 1px #fff; }
      .lg { display: block; width: fit-content; margin: -9px 0 0 7px; padding: 0 1px; background: #d4d0c8; line-height: 16px; height: 16px; }
    `, '<span class="lg" id="lg"></span><slot></slot>');
  }
  connectedCallback() { this.shadowRoot.getElementById('lg').textContent = this.getAttribute('legend'); }
}
customElements.define('gl-group', GlGroup);

class GlRadios extends HTMLElement {
  constructor() {
    super();
    shadow(this, `
      :host { display: flex; align-items: center; height: 16px; margin-top: 9px; padding-left: 13px; }
      .r { width: 12px; height: 12px; box-sizing: border-box; border-radius: 50%; background: #fff; border: 1px solid #808080; box-shadow: 1px 1px #fff; display: flex; align-items: center; justify-content: center; flex: none; }
      .r i { width: 4px; height: 4px; border-radius: 50%; background: #000; }
      span { margin-left: 5px; white-space: nowrap; }
    `, `<div class="r"><i></i></div><span>清单工程量</span>
        <div class="r" style="margin-left:8px"></div><span style="margin-left:5px">定额工程量</span>`);
  }
}
customElements.define('gl-radios', GlRadios);

class GlCalcBox extends HTMLElement {
  constructor() {
    super();
    shadow(this, `
      :host { display: flex; box-sizing: border-box; height: 107px; margin: 5px 10px 0 10px; background: #fff; border: 1px solid; border-color: #404040 #fff #fff #404040; box-shadow: inset 1px 1px #808080; }
      .t { flex: 1; padding: 1px 0 0 25px; overflow: hidden; }
      .sb { width: 16px; display: flex; flex-direction: column; flex: none; margin: 1px 1px 1px 0; }
      .btn, .thumb { background: #d4d0c8; border: 1px solid; border-color: #fff #404040 #404040 #fff; box-sizing: border-box; }
      .btn { height: 16px; flex: none; display: flex; align-items: center; justify-content: center; }
      .up { border: 4px solid transparent; border-bottom: 4px solid #000; border-top: 0; }
      .dn { border: 4px solid transparent; border-top: 4px solid #000; border-bottom: 0; }
      .thumb { height: 65px; flex: none; }
      .track { flex: 1; background: repeating-conic-gradient(#fff 0 25%, #d4d0c8 0 50%) 0 0 / 2px 2px; }
    `, `<div class="t"><slot></slot></div>
        <div class="sb"><div class="btn"><i class="up"></i></div><div class="thumb"></div><div class="track"></div><div class="btn"><i class="dn"></i></div></div>`);
  }
}
customElements.define('gl-calc-box', GlCalcBox);

class GlButton extends HTMLElement {
  constructor() {
    super();
    shadow(this, `
      :host { display: inline-flex; flex: none; align-items: center; justify-content: center; height: 25px; box-sizing: border-box; white-space: nowrap;
              background: #d4d0c8; border: 1px solid; border-color: #fff #404040 #404040 #fff; box-shadow: inset -1px -1px #808080; }
      :host([default]) { outline: 1px solid #000; outline-offset: -1px; box-shadow: inset 1px 1px #fff, inset -2px -2px #808080; }
      #k { font: 12px/16px 'Liberation Mono', monospace; letter-spacing: -1.2px; margin-left: 2px; }
      u { text-underline-offset: 1px; }
    `, '<slot></slot><span id="k"></span>');
  }
  connectedCallback() {
    this.style.width = this.getAttribute('w') + 'px';
    var k = this.getAttribute('key');
    if (k) this.shadowRoot.getElementById('k').innerHTML = '(<u>' + k + '</u>)';
  }
}
customElements.define('gl-button', GlButton);

class GlManualInput extends HTMLElement {
  constructor() {
    super();
    shadow(this, `
      :host { display: block; padding: 5px 10px 0 2px; }
      .row { display: flex; align-items: center; margin-top: 7px; padding-left: 7px; }
      .lb { margin-left: 22px; white-space: nowrap; }
      .res { flex: 1; margin-left: 8px; height: 19px; box-sizing: border-box; background: #ffffe0; border: 1px solid; border-color: #404040 #fff #fff #404040; box-shadow: inset 1px 1px #808080; }
    `, `
      <gl-field style="height:42px"></gl-field>
      <div class="row">
        <gl-button w="90" key="R">重新输入</gl-button>
        <span class="lb">手工算量结果=</span>
        <div class="res"></div>
      </div>`);
  }
}
customElements.define('gl-manual-input', GlManualInput);

class GlDialogFoot extends HTMLElement {
  constructor() {
    super();
    shadow(this, ':host{display:flex;margin-top:12px;flex:none}', '<slot></slot>');
  }
}
customElements.define('gl-dialog-foot', GlDialogFoot);

class GlTip extends HTMLElement {
  constructor() {
    super();
    shadow(this, `:host { position: absolute; left: 1031px; top: 203px; width: 188px; height: 30px; box-sizing: border-box; padding: 1px 3px;
        background: #1a1a60; color: #a4a4c8; line-height: 14px; font-size: 12px; white-space: nowrap; }`, '<slot></slot>');
  }
}
customElements.define('gl-tip', GlTip);

// the red marks someone drew over the screenshot
class GlMarks extends HTMLElement {
  constructor() {
    super();
    shadow(this, ':host{position:absolute;left:0;top:0;width:1310px;height:778px;pointer-events:none} svg{display:block}', `
      <svg width="1310" height="778" viewBox="0 0 1310 778" fill="none">
        <rect x="57" y="3.500" width="193" height="25" stroke="#e9403e" stroke-width="3"/>
        <rect x="48.500" y="348" width="95.500" height="56" stroke="#e9403e" stroke-width="3"/>
        <polygon points="191.500,30 165,200 142.500,338 144,340 133,353 127.500,336 135,338 160,200 190.500,30" fill="#e9403e"/>
        <ellipse cx="980.500" cy="404.500" rx="257" ry="38" stroke="#e04a48" stroke-width="2.500"/>
        <polygon points="922,469 890,526 893,528 879,539 882,521 885,523" fill="#e9403e"/>
      </svg>`);
  }
}
customElements.define('gl-marks', GlMarks);
</script>
</body>
</html>
